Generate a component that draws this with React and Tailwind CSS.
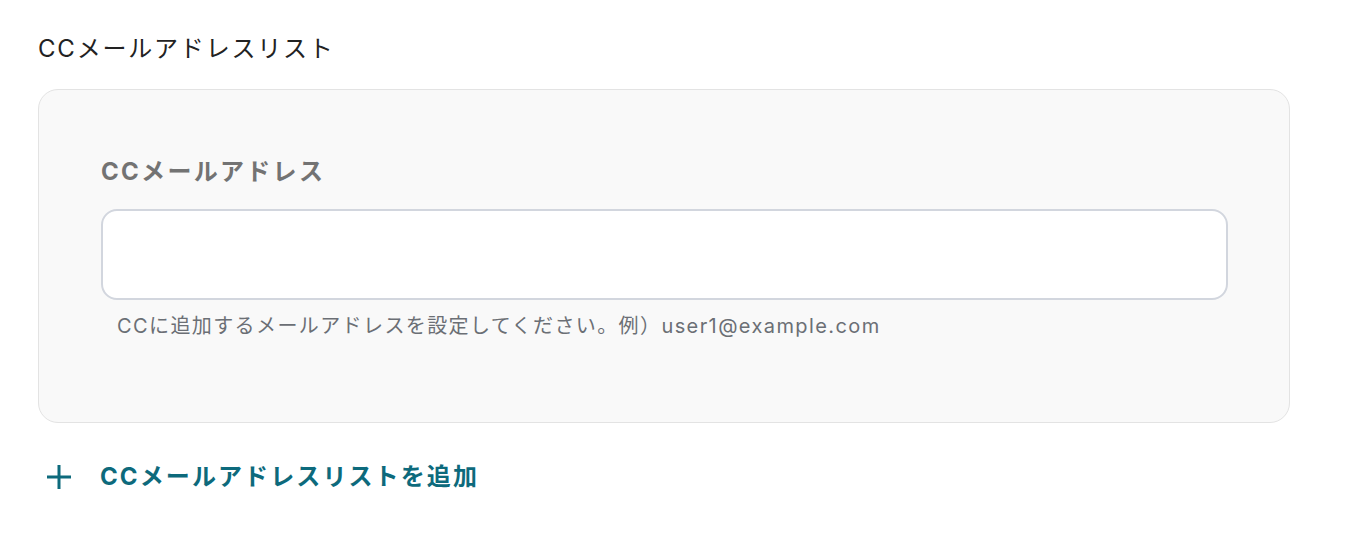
const font = { fontFamily: 'Inter, "Noto Sans CJK JP", sans-serif' }

function PlusIcon() {
  return (
    <svg width="26" height="26" viewBox="0 0 26 26" fill="none" stroke="currentColor" strokeWidth="3">
      <path d="M13 1v24M1 13h24" />
    </svg>
  )
}

export default function App() {
  return (
    <div className="min-h-[548px] w-[1352px] bg-white px-[38px] pt-[33px]" style={font}>
      <h2 className="text-[24px] leading-[32px] tracking-[1.8px] text-[#222222] font-normal">CCメールアドレスリスト</h2>

      <div className="mt-[24px] w-[1252px] h-[334px] rounded-[20px] border border-[#e3e3e3] bg-[#f9f9f9] px-[62px] pt-[66px]">
        <label className="block text-[24px] leading-[32px] font-bold tracking-[2.3px] text-[#737373]">CCメールアドレス</label>
        <input
          type="text"
          className="mt-[21px] block w-[1127px] h-[91px] rounded-[16px] border-2 border-[#d2d6de] bg-white px-4 outline-none"
        />
        <p className="mt-[12px] pl-[16px] text-[20px] leading-[28px] tracking-[1.4px] text-[#6b6f75]">
          CCに追加するメールアドレスを設定してください。例）user1@example.com
        </p>
      </div>

      <button className="mt-[38px] flex items-center gap-[28px] pl-[8px] text-[#0d6a7c]">
        <PlusIcon />
        <span className="text-[24px] leading-[32px] font-bold tracking-[2.1px]">CCメールアドレスリストを追加</span>
      </button>
    </div>
  )
}
